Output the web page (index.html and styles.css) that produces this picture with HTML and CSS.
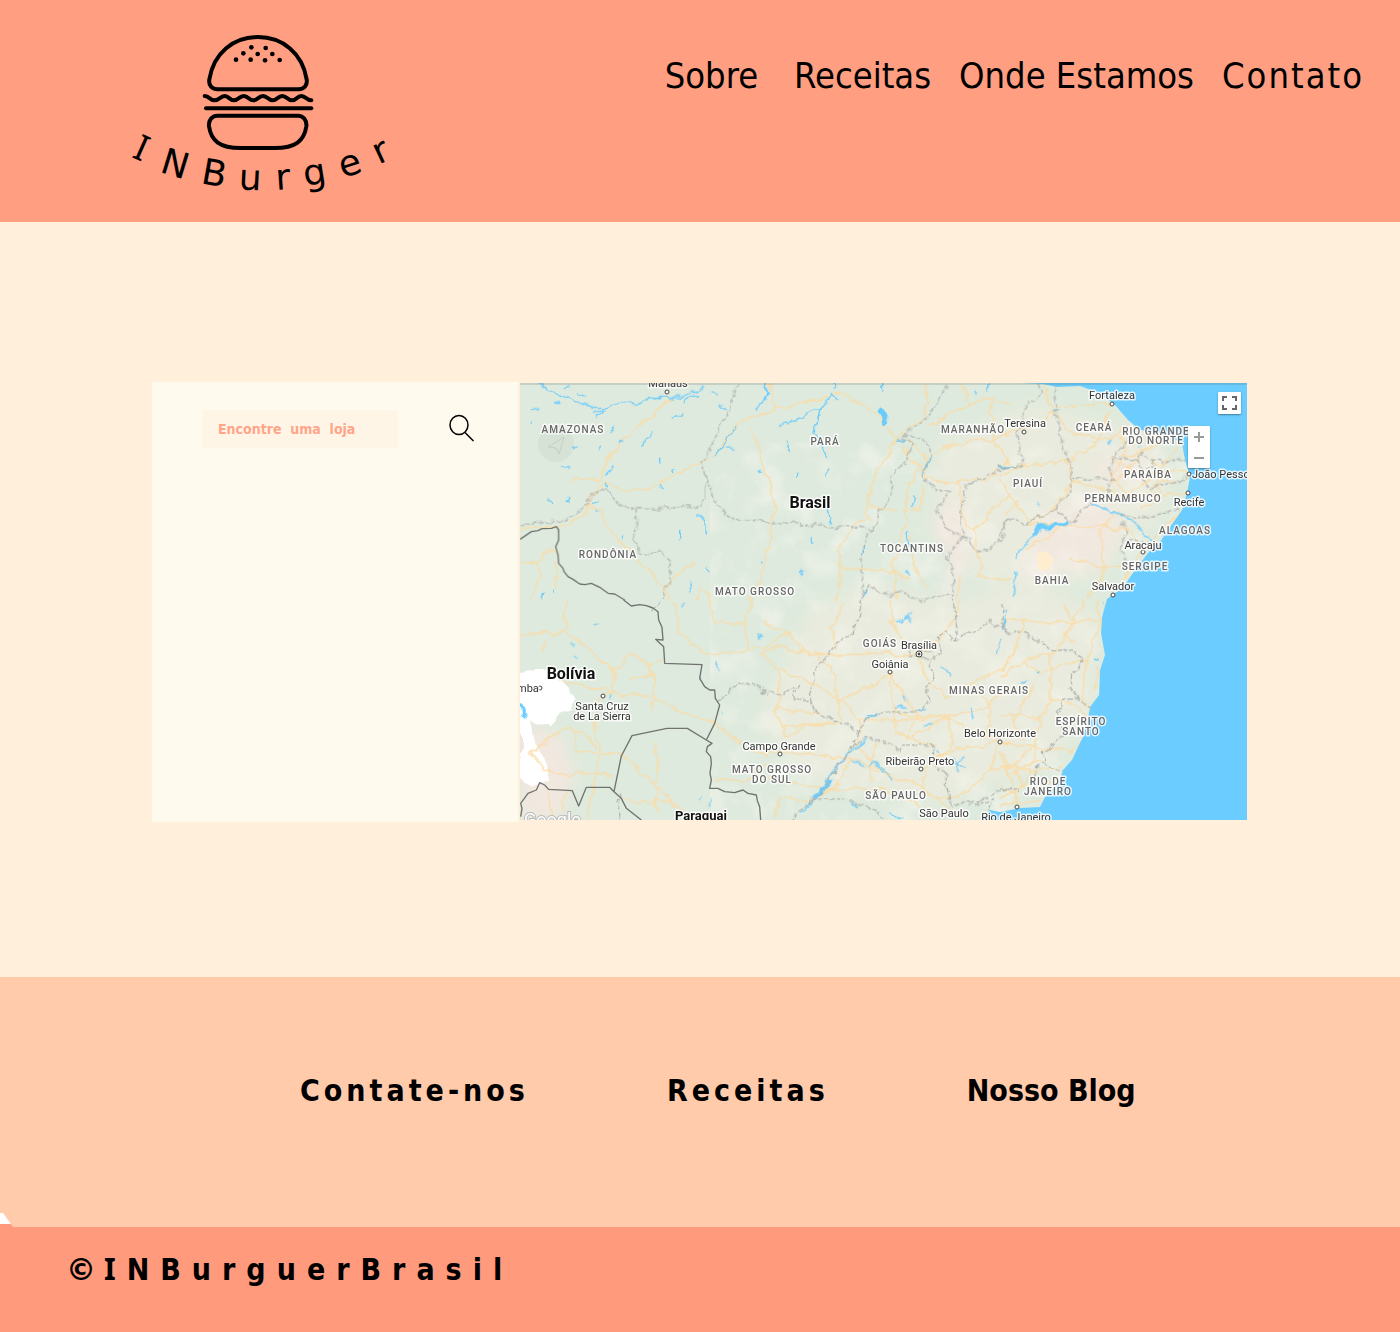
FILE: index.html
```html
<!DOCTYPE html>
<html lang="pt-BR">
<head>
<meta charset="utf-8">
<meta name="viewport" content="width=device-width, initial-scale=1">
<title>INBurger - Onde Estamos</title>
<link rel="stylesheet" href="styles.css">
</head>
<body>
<header class="header">
  <a class="logo" href="#" aria-label="INBurger">
    <svg class="logo-art" viewBox="0 0 840 570">
      <g class="logo-lines">
        <path d="M292 208H536C552 208 563 196 560 178C547 98 486 51 414 51C341 51 281 98 268 178C265 196 276 208 292 208Z"/>
        <path d="M254 228C270 228 268 241 284 241C300 241 300 228 314 228C328 228 328 241 342 241C357 241 357 228 371 228C386 228 386 241 400 241C414 241 414 228 429 228C443 228 443 241 458 241C472 241 472 228 487 228C501 228 501 241 516 241C530 241 530 228 544 228C558 228 558 241 574 241"/>
        <path d="M258 265H574"/>
        <path d="M292 287H534C550 287 561 301 559 319C553 362 527 384 464 384H362C299 384 273 362 267 319C265 301 276 287 292 287Z"/>
      </g>
      <g><circle cx="394" cy="82" r="7"/><circle cx="437" cy="84" r="7"/><circle cx="370" cy="100" r="7"/><circle cx="413" cy="102" r="7"/><circle cx="457" cy="102" r="7"/><circle cx="348" cy="119" r="7"/><circle cx="392" cy="119" r="7"/><circle cx="435" cy="121" r="7"/><circle cx="479" cy="120" r="7"/></g>
      <text class="logo-text" x="33 116 240 355 469 555 668 776" y="411 455 490 508 510 499 475 434" rotate="24 17 10 3 -4 -9 -18 -25"><tspan class="serif-i">I</tspan>NBurger</text>
    </svg>
  </a>
  <nav class="nav">
    <a class="nav-first" href="#">Sobre</a>
    <a href="#">Receitas</a>
    <a href="#">Onde Estamos</a>
    <a class="spaced" href="#">Contato</a>
  </nav>
</header>

<main class="main">
  <form class="finder">
    <input class="finder-input" type="text" aria-label="Encontre uma loja" placeholder="Encontre  uma  loja">
    <button class="finder-button" type="button" aria-label="Buscar">
      <svg width="26" height="28" viewBox="0 0 52 56"><ellipse cx="20" cy="22" rx="18" ry="19"/><path d="M32 37L49 54"/></svg>
    </button>
  </form>
  <section class="map" aria-label="Mapa">
    <svg class="map-art" viewBox="0 0 727 437">
      <defs>
        <clipPath id="land"><path d="M0 0H500L523 1L537 4L560 3L580 10L595 22L608 37L620 47L647 52L662 60L665 77L670 94L667 110L662 127L650 144L640 159L628 170L613 190L603 204L587 216L582 234L581 250L585 272L580 287L579 312L570 324L567 340L563 354L558 364L552 377L543 387L539 399L525 414L520 424L500 425L480 429L470 427L462 437H0Z"/></clipPath>
        <filter id="soft" x="-20%" y="-20%" width="140%" height="140%"><feGaussianBlur stdDeviation="7"/></filter>
        <filter id="rough" x="0" y="0" width="100%" height="100%"><feTurbulence type="fractalNoise" baseFrequency="0.03" numOctaves="4" seed="7"/><feColorMatrix values="0 0 0 0 .94  0 0 0 0 .92  0 0 0 0 .86  3 0 0 0 -1.400"/></filter>
        <filter id="jag" x="-10%" y="-10%" width="120%" height="120%"><feTurbulence type="fractalNoise" baseFrequency="0.040" numOctaves="3" seed="3"/><feDisplacementMap in="SourceGraphic" scale="14" xChannelSelector="R" yChannelSelector="G"/></filter>
        <filter id="wander" filterUnits="userSpaceOnUse" x="0" y="0" width="2181" height="1311"><feTurbulence type="fractalNoise" baseFrequency="0.025" numOctaves="3" seed="5"/><feDisplacementMap in="SourceGraphic" scale="30" xChannelSelector="R" yChannelSelector="G"/></filter>
      </defs>
      <rect class="sea" width="727" height="437"/>
      <g clip-path="url(#land)">
        <rect class="soil" width="727" height="437"/>
        <g filter="url(#soft)">
          <path class="dry" d="M290 225L350 200L440 220L500 190L580 230L570 330L530 380L420 420L290 400L240 340Z"/>
          <path class="dry" d="M420 60L510 20L640 50L650 120L570 200L450 190L410 150Z"/>
          <path class="rose" d="M410 140L440 110L450 160L440 200L425 235L430 180Z"/>
          <path class="rose" d="M530 130L570 110L600 130L590 180L550 185L515 200L500 180Z"/>
          <path class="rose" d="M570 75L620 70L630 95L580 100Z"/>
          <path class="rose" d="M0 340L40 350L55 390L40 437H0Z"/>
        </g>
        <g opacity=".5"><rect x="190" y="60" width="500" height="377" filter="url(#rough)"/></g>
        <path class="sand" d="M517 171L527 168L534 177L528 188L518 186Z"/>
        <path class="snow" filter="url(#jag)" d="M0 290L18 286L40 296L56 312L50 328L30 344L12 338L18 365L30 385L28 398L8 402L0 396Z"/>
        <svg width="727" height="437" viewBox="0 0 2181 1311">
          <g class="roads" filter="url(#wander)">
            <g transform="translate(-6 -9)"><path d="M460 50L425 90L360 135L310 190L270 240L250 300L155 300L150 290M265 305L330 337L400 320L560 240L600 215L655 135L700 110L750 95M690 140L720 190L735 260L770 360L755 480L730 600L690 660M265 305L215 345L205 400L150 435L50 440L6 450M205 382L245 385L262 440L310 490L350 540L390 560L440 630L460 660M440 630L470 590L525 548M6 552H60L75 520L120 515M60 552L70 590L35 660M110 540L115 630M530 660L545 632L575 640V660"/></g>
            <g transform="translate(720 -9)"><path d="M0 100L150 65L240 38L340 90L405 170L440 180L480 220L505 245L500 295L590 305L620 300L690 300L750 230M30 10L45 95M405 170L390 220L340 290L315 400L325 415L280 440L240 500V600L225 660M405 170L490 120L500 60L495 10M500 145L560 105L635 70L690 50L750 75M635 70L600 10M505 230L580 195L690 175L750 165M690 60L700 170L750 250M430 195L455 245L500 260L460 280L440 340L435 430L400 560L410 660M330 380L410 392M500 310L480 380L440 398M245 562L400 575L455 600M600 300L605 400L640 450L700 390L750 340M640 450L665 580L655 592L750 597M600 590L590 660M455 470L460 550L490 600L500 620"/></g>
            <g transform="translate(1440 -9)"><path d="M335 75L280 75L180 75L120 130L0 165M130 20L160 90L200 150L260 170L330 180L370 140L420 150M0 260L70 260L200 240L280 200L335 90M200 240L215 300L320 330L370 350L560 340M215 300L180 370L90 430L0 300M90 430L200 435L320 440L385 450L420 500M330 230L420 290L500 270L560 280M380 220L330 290L380 340L450 300L500 230L540 210M360 160L380 230L490 190M450 340L480 300L530 300M350 390L300 450L315 590L260 660M180 440L80 510M210 535L315 560L400 550M550 385L470 470L410 540L350 630M0 290L80 250M60 360L20 400M440 200L390 270L330 310M460 230L480 330L430 390"/></g>
            <g transform="translate(-6 651)"><path d="M6 105L70 100L140 100L210 140L250 185L290 210L340 165L390 190L410 230L405 300L400 340M140 100L145 0M75 155L90 120M95 225L160 250L240 265L290 275L400 290L500 340L590 368L640 420L750 465M290 210L280 280L240 300L230 380L245 460L230 540L210 660M245 460L310 462L360 510L440 580L500 640M330 240L410 220M310 600L400 605L460 595M405 425L415 440V640M460 0L490 100L560 165L690 155L750 135M580 0L585 60L680 80L700 0M690 155L680 80M40 460L90 420L150 380L210 410L230 440M40 460L80 510L150 525L240 520L280 525M90 570L100 660M140 570V640M590 540L680 540L750 490M390 195L440 185M160 375L180 450L230 460"/></g>
            <g transform="translate(720 651)"><path d="M0 160L60 140L150 160L240 170L330 160L390 160L450 175L476 162L540 120L580 60L600 0M0 160L55 210L50 350L85 410L140 375L210 365M60 210L140 240L240 295L330 260L390 220L400 330L450 350L560 345L690 320L750 260M240 295L300 360L420 360L560 350M160 150L220 220L235 290L240 370L60 380M390 220L470 350L440 420L560 350L580 440L490 505L500 580L540 600M476 162L490 220L560 290L640 250L750 190M390 0L400 80L450 150M0 60L80 95L130 155M0 455L150 460L270 475L370 520L490 560L530 600L600 640M270 475L230 560L150 600L60 590L40 650M300 360L290 440L350 500L420 540M0 520L90 550L210 570L350 560L480 620M560 350L650 400L720 425L750 430M640 250L690 320L680 410M490 505L560 460L650 440L720 425L690 510L620 580L530 600M250 10L210 90L230 150M20 140L90 95M50 330L180 340M350 430L330 540M400 330L410 400L530 440M690 510L750 500"/></g>
            <g transform="translate(1440 651)"><path d="M0 70L70 55L140 70L240 65L310 60M0 230L80 180L160 160L240 30L250 0M70 55L70 100L10 210M120 220L200 190L260 180L300 70L290 0M120 220L60 180M150 160L155 300L120 350L100 470L75 560L0 590M155 300L210 310L260 350M120 350L0 345M0 430L100 440L210 455L240 430M100 440L40 500L70 560M0 500L110 510L190 500M0 600L50 560L120 555L180 540M260 180L250 300L265 330M0 620L120 600M180 10L230 60M20 500L60 620M70 420L40 360L100 260M190 100L225 130M300 200L280 270M0 460L30 520L120 480M0 560L60 590"/></g>
          </g>
          <g class="rivers" filter="url(#wander)">
            <g transform="translate(-6 -9)"><path d="M60 10L120 45L180 70L230 85L250 85L320 70L360 70L440 50L500 50L550 20M230 100L260 90M240 115L262 88M380 65L430 55M500 65L540 40M140 25L155 20M575 35L600 45M600 75L620 90M750 30L735 65L710 90M655 140L625 185L590 225M490 100L460 125M410 155L370 190M290 140L275 155M320 180L305 190M200 50L180 35M100 70H125M40 90L60 80M35 130L40 125M290 260L265 285M265 305L268 325M470 260L473 275M415 320L435 330M220 370L240 365M235 385L240 395M160 350L150 370M95 355L98 370M125 260H155M165 205H185M250 200L240 210M530 405L560 430L562 460M485 450V480M520 610L515 640M560 560L575 580M80 640L75 655M105 630L110 640M425 230V250M625 200L650 212M315 460L310 475"/></g>
            <g transform="translate(720 -9)"><path d="M58 135L100 120L180 80L220 40M180 80L165 160L200 240M215 40L235 60M25 10L15 60M650 45L640 40M690 10L680 35M365 10V40M220 10L230 30M405 170L440 180M80 190L90 215M110 270V290M190 290L215 265M0 265L5 275M510 240L490 290M462 350V380M445 450V500M160 470L155 490M205 390L215 430M310 500V520M750 255L720 260M440 570L455 590M120 570L135 590M0 540L5 550M310 650L325 620"/><path class="wide" d="M358 85L368 115L385 138M365 95L378 118"/></g>
            <g transform="translate(1440 -9)"><path class="wide" d="M200 425L150 440L120 440L100 465"/><path d="M100 465L60 510L50 540M270 370L340 395L360 400L460 480M0 258L45 260M160 90L175 90M325 190L335 180M110 375L115 370M45 575L40 650M410 200L415 205"/></g>
            <g transform="translate(-6 651)"><path d="M235 68L243 72M160 135L165 140M715 105L735 108L720 112M590 185L592 200L605 215M277 285V300M585 590L580 620M490 20L498 12M170 165L175 170M610 330L612 335M550 235V245M550 590L545 600"/><path class="wide" d="M8 310L14 350"/></g>
            <g transform="translate(720 651)"><path d="M405 65L450 50L458 72M440 50L452 40M315 360L350 335L320 345M270 480L310 500M330 500L350 490L400 540M360 510L370 520M120 640L160 600L260 460L320 420M400 325L440 320M625 320L640 355M485 375H510M435 290L440 300M530 455L540 460M580 480L620 500M590 520L600 480L610 470M270 610L300 620M390 645L430 650M540 200L575 225M720 120L705 160M460 330L500 325"/><path class="wide" d="M160 595L215 540"/></g>
            <g transform="translate(1440 651)"><path d="M20 30L5 90M65 250L85 240M105 215L115 213M285 178L300 172M310 10L314 15"/></g>
          </g>
          <g class="states" filter="url(#wander)">
            <g transform="translate(-6 -9)"><path d="M6 440L60 425L140 420L200 385L225 332H265L310 380L345 385L355 383H550L565 290L545 250L560 235L665 10M565 290L600 380L650 420L750 427M355 385L352 440L358 519H430L455 545L460 605L440 625L432 660"/></g>
            <g transform="translate(720 -9)"><path d="M0 427L330 447L300 530L310 660M330 447L395 340L388 290L435 250L455 190L425 170L495 120L550 40L560 10M430 165L500 185L508 240L490 285L530 335L565 335L550 365L530 390L570 460L610 470L600 385L625 315L750 258M610 470L660 515L700 500L735 470L730 430L750 410M610 470L560 530L580 570L575 660M310 640L330 620L390 650L420 635L480 660L575 640"/></g>
            <g transform="translate(1440 -9)"><path d="M110 10L125 40L70 90L75 120L50 160L68 240L60 260L0 258M160 10L175 140L215 280L210 330L175 380L210 430L270 370L320 340L330 290L340 230L410 240L420 220L460 240L560 245M175 380L70 435L20 415L0 480M340 300L220 295M380 185L340 230M410 240L430 290L450 330L560 290M360 400L410 420L540 385M370 430L375 480L460 490M375 480L360 510L380 560M430 265L460 260V235"/></g>
            <g transform="translate(-6 651)"><path d="M600 300L640 265L700 250L750 280M305 580V660M400 30L425 10"/></g>
            <g transform="translate(720 651)"><path d="M305 0L285 70L275 105L240 125L185 190L145 270L150 300L100 295L115 255L60 285L0 265M150 300L165 335L290 395L310 370L330 345L480 330L515 300L500 265L525 235L505 190L510 175H450V155L510 150L520 175L545 165L535 110L560 95L590 120L690 65L750 95M290 395L280 435L315 415L390 430L410 455L420 435L515 435L530 500L560 520L555 560L575 610L640 610L750 560M280 435L240 490L180 580L110 640L100 660M150 600L240 600L350 625L370 650M590 120L580 0M620 620L700 600L690 640"/></g>
            <g transform="translate(1440 651)"><path d="M10 10L5 80L25 100L50 90L120 120L160 155L215 150L255 175L215 220L210 265L235 295L265 320M235 295L190 300L175 330L190 370L185 400L150 445L130 450L135 490L185 515M130 480L110 500L105 530M0 567L50 560L60 570"/></g>
          </g>
          <g class="countries">
            <g transform="translate(-6 -9)"><path d="M6 478L40 455L60 452L72 446L100 445L115 440L122 450V480L113 500L120 525L122 550L135 565L138 575L150 590L165 598L185 612L200 614L220 610L245 622L270 640L290 642L320 660"/></g>
            <g transform="translate(-6 651)"><path d="M317 0L340 18L365 14L385 17L405 24L420 35L422 60L432 82L435 120L413 118L437 140L440 190L552 194L545 235L560 260L575 270L590 270L592 295L605 315L590 370L565 420L582 430L568 440L565 455L578 470L580 490L576 520L580 540L575 565L600 565L620 575L650 578L675 570L690 580L715 585L718 602L725 620L728 660M565 420L508 385H447L342 407L310 468L288 575L275 562H205L182 618L163 572L92 568L80 555L65 548L55 570L30 580L8 610L12 625L8 650M288 575L310 595L325 625L370 660"/></g>
          </g>
        </svg>
      </g>
      <g class="pin-marks"><circle cx="147" cy="9" r="2"/><circle cx="592" cy="21" r="2"/><circle cx="504" cy="49" r="2"/><circle cx="669" cy="91" r="2"/><circle cx="668" cy="110" r="2"/><circle cx="623" cy="169" r="2"/><circle cx="593" cy="212" r="2"/><circle cx="370" cy="289" r="2"/><circle cx="480" cy="359" r="2"/><circle cx="260" cy="371" r="2"/><circle cx="401" cy="386" r="2"/><circle cx="497" cy="424" r="2"/><circle cx="83" cy="313" r="2"/><circle cx="20" cy="305" r="2"/><circle cx="399" cy="271" r="3"/><circle class="dot" cx="399" cy="271" r="1"/></g>
      <g class="state-labels">
        <text x="53" y="50">AMAZONAS</text><text x="305" y="62">PARÁ</text><text x="453" y="50">MARANHÃO</text><text x="574" y="48">CEARÁ</text><text x="636" y="52">RIO GRANDE</text><text x="636" y="61">DO NORTE</text><text x="628" y="95">PARAÍBA</text><text x="508" y="104">PIAUÍ</text><text x="603" y="119">PERNAMBUCO</text><text x="665" y="151">ALAGOAS</text><text x="625" y="187">SERGIPE</text><text x="532" y="201">BAHIA</text><text x="88" y="175">RONDÔNIA</text><text x="392" y="169">TOCANTINS</text><text x="235" y="212">MATO GROSSO</text><text x="360" y="264">GOIÁS</text><text x="469" y="311">MINAS GERAIS</text><text x="561" y="342">ESPÍRITO</text><text x="561" y="352">SANTO</text><text x="528" y="402">RIO DE</text><text x="528" y="412">JANEIRO</text><text x="252" y="390">MATO GROSSO</text><text x="252" y="400">DO SUL</text><text x="376" y="416">SÃO PAULO</text>
      </g>
      <g class="city-labels">
        <text x="148" y="4">Manaus</text><text x="592" y="16">Fortaleza</text><text x="505" y="44">Teresina</text><text class="start" x="672" y="95">João Pessoa</text><text x="669" y="123">Recife</text><text x="623" y="166">Aracaju</text><text x="593" y="207">Salvador</text><text x="399" y="266">Brasília</text><text x="370" y="285">Goiânia</text><text x="480" y="354">Belo Horizonte</text><text x="259" y="367">Campo Grande</text><text x="400" y="382">Ribeirão Preto</text><text x="424" y="434">São Paulo</text><text x="496" y="438">Rio de Janeiro</text><text x="82" y="327">Santa Cruz</text><text x="82" y="337">de La Sierra</text><text class="start" x="-3" y="309">mba</text>
      </g>
      <g class="country-labels"><text x="290" y="125">Brasil</text><text x="51" y="296">Bolívia</text><text class="small" x="181" y="437">Paraguai</text></g>
      <text class="brand" x="4" y="443">Google</text>
      <g class="locate"><circle cx="36" cy="61" r="18"/><path d="M28 64L44 54L39 71L36 65Z"/></g>
      <rect class="map-edge" width="727" height="2"/>
    </svg>
    <button class="map-full" type="button" aria-label="Tela cheia"><svg width="15" height="14" viewBox="0 0 15 14"><path d="M1 5V1H5M10 1H14V5M14 9V13H10M5 13H1V9"/></svg></button>
    <div class="map-zoom">
      <button type="button" aria-label="Aumentar zoom"><svg width="10" height="10" viewBox="0 0 10 10"><path d="M0 5H10M5 0V10"/></svg></button>
      <button type="button" aria-label="Diminuir zoom"><svg width="10" height="10" viewBox="0 0 10 10"><path d="M0 5H10"/></svg></button>
    </div>
  </section>
</main>

<footer>
  <nav class="footer-links">
    <a class="wide-text" href="#">Contate-nos</a>
    <a class="wide-text" href="#">Receitas</a>
    <a href="#">Nosso Blog</a>
  </nav>
  <p class="copyright"><span class="copy-sign">©</span><span class="serif-i">I</span>NBurguerBrasil</p>
</footer>
</body>
</html>
```

FILE: styles.css
```css
* { box-sizing: border-box; }

body {
  margin: 0;
  background: #ffefdb;
  color: #000;
  font-family: "DejaVu Sans Condensed", "DejaVu Sans", sans-serif;
}

a { color: inherit; text-decoration: none; }
button { padding: 0; border: 0; cursor: pointer; }
svg { display: block; }

.header {
  display: flex;
  justify-content: space-between;
  align-items: flex-start;
  padding: 20px 36px 12px 120px;
  background: #ff9e80;
}
.logo-art { width: 280px; height: 190px; }
.logo-lines { fill: none; stroke: #000; stroke-width: 12px; stroke-linecap: round; stroke-linejoin: round; }
.logo-text { font-family: "DejaVu Sans", sans-serif; font-size: 108px; }
.serif-i { font-family: "Noto Sans", sans-serif; }

.nav {
  display: flex;
  gap: 28px;
  padding-top: 34px;
  font-size: 36px;
  line-height: 44px;
  white-space: nowrap;
}
.nav-first { padding-right: 8px; }
.spaced { letter-spacing: 2px; }

.main {
  display: grid;
  grid-template-columns: 366fr 727fr;
  gap: 2px;
  align-items: start;
  padding: 160px 153px 155px 152px;
}

.finder {
  display: flex;
  justify-content: space-between;
  align-items: flex-start;
  min-height: 440px;
  padding: 28px 43px 0 50px;
  background: #fffaee;
}
.finder-input {
  width: 196px;
  height: 38px;
  padding: 0 16px;
  border: 0;
  background: #fff5e7;
  color: #ff9e80;
  font: bold 14px "DejaVu Sans Condensed", "DejaVu Sans", sans-serif;
}
.finder-input::placeholder { color: #ffa589; opacity: 1; }
.finder-button { margin-top: 4px; background: none; }
.finder-button svg { fill: none; stroke: #000; stroke-width: 3px; }

.map { position: relative; margin-top: 1px; overflow: hidden; }
.map-art { width: 100%; height: auto; }
.sea { fill: #6bcdff; }
.soil { fill: #deeadd; }
.dry { fill: #e8ebdd; }
.rose { fill: #f1e8df; }
.sand { fill: #ffedcf; }
.snow { fill: #fff; }
.roads { fill: none; stroke: #fbdba4; stroke-width: 4px; stroke-linejoin: round; }
.rivers { fill: none; stroke: #6bcbfd; stroke-width: 4px; stroke-linejoin: round; }
.rivers .wide { stroke-width: 12px; }
.states { fill: none; stroke: #b1b5b1; stroke-width: 4px; stroke-dasharray: 14 5; }
.countries { fill: none; stroke: #707370; stroke-width: 4px; stroke-linejoin: round; }
.pin-marks { fill: #fff; stroke: #444; stroke-width: 1px; }
.pin-marks .dot { fill: #222; }

.state-labels, .city-labels, .country-labels {
  font-family: Roboto, sans-serif;
  text-anchor: middle;
  paint-order: stroke;
  stroke: rgb(255 255 255 / 80%);
  stroke-width: 3px;
  stroke-linejoin: round;
}
.state-labels { font-size: 10px; font-weight: 500; letter-spacing: 1px; fill: #666; }
.city-labels { font-size: 11px; fill: #333; }
.city-labels .start { text-anchor: start; }
.country-labels { font-size: 16px; font-weight: 700; fill: #111; }
.country-labels .small { font-size: 13px; }
.brand { font: 18px Roboto, sans-serif; fill: #fff; stroke: #bbb; stroke-width: 2px; paint-order: stroke; }
.locate { fill: rgb(120 130 120 / 7%); }
.locate path { fill: none; stroke: #c5cec5; stroke-width: 1px; }
.map-edge { fill: rgb(90 90 80 / 18%); }

.map-full, .map-zoom {
  position: absolute;
  background: #fff;
  border-radius: 1px;
  box-shadow: 0 1px 2px rgb(0 0 0 / 40%);
}
.map-full { top: 9px; right: 6px; width: 23px; height: 22px; }
.map-full svg { margin: 0 auto; fill: none; stroke: #666; stroke-width: 2px; }
.map-zoom { top: 43px; right: 37px; width: 22px; }
.map-zoom button { display: block; width: 22px; height: 21px; background: none; }
.map-zoom svg { margin: 0 auto; stroke: #999; stroke-width: 2px; }

.footer-links {
  display: flex;
  gap: 138px;
  padding: 96px 0 118px 300px;
  background: #ffcbab;
  font-size: 30px;
  font-weight: 700;
  line-height: 36px;
  white-space: nowrap;
}
.wide-text { letter-spacing: 4px; }

.copyright {
  position: relative;
  margin: 0;
  padding: 24px 66px 45px;
  background: #ff9a7d;
  font-size: 30px;
  font-weight: 700;
  line-height: 36px;
  letter-spacing: 11px;
}
.copy-sign { font-family: "DejaVu Sans", sans-serif; letter-spacing: 8px; }
/* notch where the links band meets the copyright bar */
.copyright::before {
  content: "";
  position: absolute;
  top: -14px;
  left: 0;
  width: 13px;
  height: 14px;
  background: linear-gradient(#fff 11px, #ff9a7d 11px);
  clip-path: polygon(0 0, 3px 0, 13px 14px, 0 14px);
}
```
